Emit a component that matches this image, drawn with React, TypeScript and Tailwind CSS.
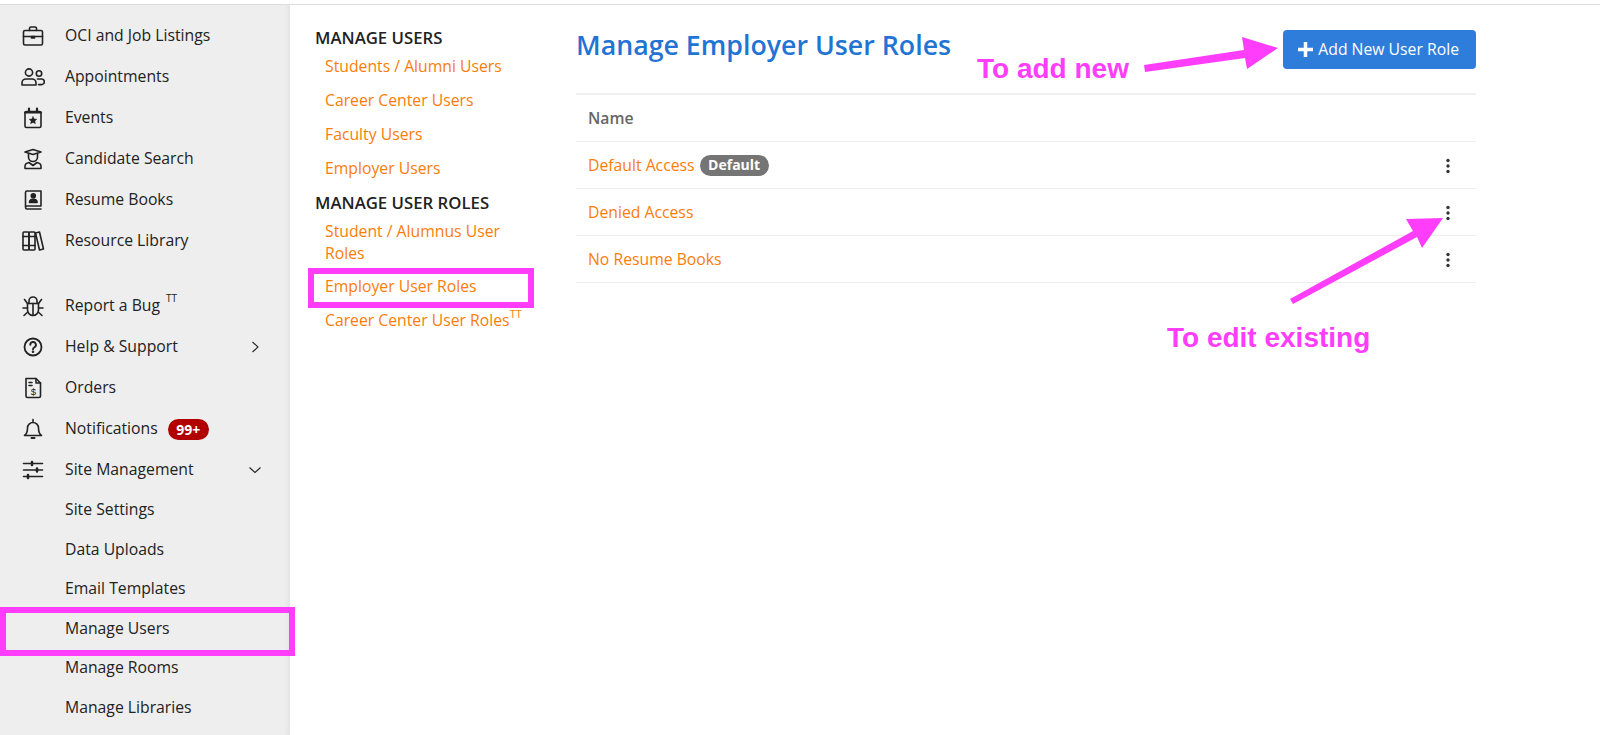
import { ReactNode } from "react";

const font = "font-['Open_Sans',sans-serif]";

const stroke = {
  fill: "none",
  stroke: "#222",
  strokeWidth: 1.6,
  strokeLinecap: "round" as const,
  strokeLinejoin: "round" as const,
};

function Icon({ children }: { children: ReactNode }) {
  return (
    <svg viewBox="0 0 24 24" className="w-6 h-6 shrink-0" {...stroke}>
      {children}
    </svg>
  );
}

const icons: Record<string, ReactNode> = {
  briefcase: (
    <>
      <rect x="2.500" y="6.500" width="19" height="14.500" rx="1.500" />
      <path d="M8.500 6.500V4.500A1.500 1.500 0 0 1 10 3h4a1.500 1.500 0 0 1 1.500 1.500v2" />
      <path d="M2.500 12.500h19" />
      <path d="M10.500 12.500h3v1.500h-3z" fill="#222" />
    </>
  ),
  people: (
    <>
      <circle cx="8" cy="7.500" r="3.600" />
      <circle cx="18" cy="8.500" r="2.700" />
      <path d="M1 20v-2a4 4 0 0 1 4-4h6a4 4 0 0 1 4 4v2z" />
      <path d="M16.500 14h4a2.800 2.800 0 0 1 2.800 2.800 2.800 2.800 0 0 1-2.800 2.800h-3" />
    </>
  ),
  calendar: (
    <>
      <rect x="4" y="5.500" width="16" height="16" rx="1.500" />
      <path d="M8 2.500v3M16 2.500v3M4 6.500h16" strokeWidth="2.200" />
      <path
        d="M12 10.500l1.200 2.400 2.700.3-2 1.800.5 2.700-2.400-1.300-2.400 1.300.5-2.700-2-1.800 2.700-.3z"
        fill="#222"
        strokeWidth="0.400"
      />
    </>
  ),
  graduate: (
    <>
      <path d="M4 5l8-2.500L20 5l-8 2.500z" />
      <path d="M7.500 6.500V10a4.500 4.500 0 0 0 9 0V6.500" />
      <path d="M8 15.500c-2.500.5-4 1.800-4 3.800v2.200h16v-2.200c0-2-1.500-3.300-4-3.800l-4 3z" />
    </>
  ),
  book: (
    <>
      <path d="M4.500 19V4.500A1.500 1.500 0 0 1 6 3h14v15H6a1.500 1.500 0 0 0 0 3h14" />
      <circle cx="12.300" cy="7.800" r="2" fill="#222" />
      <path d="M8.500 14.500c0-2.300 1.500-3.200 3.800-3.200s3.800.9 3.800 3.200z" fill="#222" />
    </>
  ),
  library: (
    <>
      <rect x="2" y="3" width="6" height="18" rx="1" />
      <rect x="8" y="3" width="6" height="18" rx="1" />
      <path d="M14.500 4l4-1 4 17-4 1zM2 7.500h12M2 16.500h12" />
    </>
  ),
  bug: (
    <>
      <path d="M6.500 9.500h11V16a5.500 5.500 0 0 1-11 0z" />
      <path d="M8 9.500V7a4 4 0 0 1 8 0v2.500M12 9.500v12" />
      <path d="M3.500 5.500l3 4M20.500 5.500l-3 4M2 14h4.500M22 14h-4.500M3 21.500l3.800-3.500M21 21.500L17.200 18" />
    </>
  ),
  help: (
    <>
      <circle cx="12" cy="12" r="8.500" strokeWidth="1.800" />
      <path d="M9.300 9.800a2.800 2.800 0 1 1 4.200 2.400c-1 .6-1.500 1.100-1.500 2" strokeWidth="1.900" />
      <circle cx="12" cy="16.700" r="0.500" fill="#222" />
    </>
  ),
  invoice: (
    <>
      <path d="M5 2.500h10l4.500 4.500v13A1.500 1.500 0 0 1 18 21.500H6.500A1.500 1.500 0 0 1 5 20z" />
      <path d="M15 2.500V7h4.500M8 6.500h3M8 9.500h3" />
      <text x="12.300" y="18.500" fontSize="9.500" textAnchor="middle" fill="#222" stroke="none" fontFamily="'Liberation Sans',sans-serif">$</text>
    </>
  ),
  bell: (
    <>
      <path d="M12 2.500v2M6.500 11a5.500 5.500 0 0 1 11 0c0 4 1 6 3 7.500h-17c2-1.500 3-3.500 3-7.500z" />
      <path d="M10.500 21h3" strokeWidth="2" />
    </>
  ),
  sliders: (
    <>
      <path d="M2.500 5.500h19M2.500 12h19M2.500 18.500h19" />
      <path d="M11 4v3M16 10.500v3M7 17v3" strokeWidth="2.500" />
    </>
  ),
};

function NavRow({
  icon,
  className = "",
  children,
}: {
  icon: string;
  className?: string;
  children: ReactNode;
}) {
  return (
    <div className={`flex items-center h-[41px] pl-[21px] text-[15.75px] text-[#222] ${className}`}>
      <Icon>{icons[icon]}</Icon>
      <div className="ml-[20px] flex items-center flex-1 pr-[29px] whitespace-nowrap">{children}</div>
    </div>
  );
}

function SubRow({ children }: { children: ReactNode }) {
  return <div className="h-[39.5px] pl-[65px] flex items-center">{children}</div>;
}

function Sidebar() {
  return (
    <aside className="relative w-[290px] shrink-0 bg-[#eeeeee] pt-[10px] shadow-[inset_-6px_0_6px_-5px_rgba(0,0,0,0.07)]">
      <NavRow icon="briefcase">OCI and Job Listings</NavRow>
      <NavRow icon="people">Appointments</NavRow>
      <NavRow icon="calendar">Events</NavRow>
      <NavRow icon="graduate">Candidate Search</NavRow>
      <NavRow icon="book">Resume Books</NavRow>
      <NavRow icon="library">Resource Library</NavRow>
      <NavRow icon="bug" className="mt-[24.500px]">
        Report a Bug <sup className="text-[10px] ml-[6px] -top-2">TT</sup>
      </NavRow>
      <NavRow icon="help">
        <span className="flex-1">Help &amp; Support</span>
        <svg viewBox="0 0 12 12" className="w-3 h-3" fill="none" stroke="#222" strokeWidth="1.100">
          <path d="M3.500 1l5.500 5-5.500 5" />
        </svg>
      </NavRow>
      <NavRow icon="invoice">Orders</NavRow>
      <NavRow icon="bell">
        Notifications
        <span className="ml-[10px] rounded-full bg-[#b00000] px-[8.500px] h-[21px] leading-[21px] text-[14px] font-bold text-white">
          99+
        </span>
      </NavRow>
      <NavRow icon="sliders">
        <span className="flex-1">Site Management</span>
        <svg viewBox="0 0 12 12" className="w-3 h-3" fill="none" stroke="#222" strokeWidth="1.100">
          <path d="M.5 3.500l5.500 5 5.500-5" />
        </svg>
      </NavRow>
      <div className="text-[15.75px] text-[#222]">
        <SubRow>Site Settings</SubRow>
        <SubRow>Data Uploads</SubRow>
        <SubRow>Email Templates</SubRow>
        <div className="relative">
          <SubRow>Manage Users</SubRow>
          <div className="absolute -top-[2.500px] left-0 h-[49px] w-[295px] border-[6px] border-[#ff3dfb]" />
        </div>
        <SubRow>Manage Rooms</SubRow>
        <SubRow>Manage Libraries</SubRow>
      </div>
    </aside>
  );
}

function SubLink({ className = "py-[6px]", children }: { className?: string; children: ReactNode }) {
  return <div className={`leading-[22px] pl-[10px] text-[15.75px] text-[#fa7d0a] ${className}`}>{children}</div>;
}

function SubHeading({ className = "", children }: { className?: string; children: ReactNode }) {
  return <h6 className={`text-[16.75px] leading-[22px] font-semibold text-[#222] ${className}`}>{children}</h6>;
}

function SubNav() {
  return (
    <nav className="w-[215px] ml-[25px] shrink-0 pt-[22px]">
      <SubHeading>MANAGE USERS</SubHeading>
      <SubLink>Students / Alumni Users</SubLink>
      <SubLink>Career Center Users</SubLink>
      <SubLink>Faculty Users</SubLink>
      <SubLink>Employer Users</SubLink>
      <SubHeading className="mt-[7px] whitespace-nowrap">MANAGE USER ROLES</SubHeading>
      <SubLink className="pt-[6px] pb-[5px]">Student / Alumnus User Roles</SubLink>
      <div className="relative">
        <SubLink>Employer User Roles</SubLink>
        <div className="absolute -top-[1px] -left-[7px] h-[40px] w-[226px] border-[6px] border-[#ff3dfb]" />
      </div>
      <SubLink className="py-[6px] whitespace-nowrap">
        Career Center User Roles
        <sup className="text-[11px] -top-2">TT</sup>
      </SubLink>
    </nav>
  );
}

function Kebab() {
  return (
    <svg viewBox="0 0 4 16" className="w-1 h-4 mr-[26px]" fill="#333">
      <circle cx="2" cy="2.500" r="1.700" />
      <circle cx="2" cy="8" r="1.700" />
      <circle cx="2" cy="13.500" r="1.700" />
    </svg>
  );
}

function RoleRow({ name, badge }: { name: string; badge?: string }) {
  return (
    <div className="flex items-center justify-between h-[47px] pt-[2px] pl-[12px] border-b border-[#eeeeee] text-[15.75px] text-[#fa7d0a]">
      <div className="flex items-center">
        {name}
        {badge && (
          <span className="ml-[5px] -mt-[2px] rounded-full bg-[#757575] px-[8.500px] h-[21px] leading-[20px] text-[14px] font-bold text-white">
            {badge}
          </span>
        )}
      </div>
      <Kebab />
    </div>
  );
}

function Main() {
  return (
    <main className="w-[900px] ml-[46px] shrink-0 pt-[25px]">
      <div className="flex justify-between items-start h-[63px]">
        <h1 className="text-[26.75px] leading-[30px] font-semibold text-[#1f74d4]">Manage Employer User Roles</h1>
        <button className="flex items-center h-[39px] pl-[15px] pr-[17px] rounded-[4px] bg-[#2f7ddb] text-[15.75px] text-white">
          <svg viewBox="0 0 15 15" className="w-[15px] h-[15px] mr-[5px]" fill="none" stroke="#fff" strokeWidth="3.500">
            <path d="M7.500 0v15M0 7.500h15" />
          </svg>
          Add New User Role
        </button>
      </div>
      <div className="border-t-2 border-[#f0f0f0] flex items-center h-[49px] pt-[1px] pl-[12px] text-[15.75px] font-semibold text-[#666] border-b border-b-[#eeeeee]">
        Name
      </div>
      <RoleRow name="Default Access" badge="Default" />
      <RoleRow name="Denied Access" />
      <RoleRow name="No Resume Books" />
    </main>
  );
}

function Annotations() {
  return (
    <>
      <div className="absolute left-[977px] top-[53px] text-[28px] leading-[32px] font-bold text-[#ff3dfb] font-['Liberation_Sans',sans-serif]">
        To add new
      </div>
      <div className="absolute left-[1167px] top-[322px] text-[28px] leading-[32px] font-bold text-[#ff3dfb] font-['Liberation_Sans',sans-serif]">
        To edit existing
      </div>
      <svg className="absolute left-0 top-0 w-[1600px] h-[735px] pointer-events-none" viewBox="0 0 1600 735" fill="#ff3dfb">
        <polygon points="1144,65 1244,50 1242,37 1278,48 1247,69 1245,58 1145,72" />
        <polygon points="1290,299 1413,231 1406,219 1443,218 1422,248 1417,237 1293,304" />
      </svg>
    </>
  );
}

export default function App() {
  return (
    <div className={`relative w-[1600px] h-[735px] overflow-hidden bg-white ${font}`}>
      <div className="h-[5px] border-b border-[#dddddd] bg-white" />
      <div className="flex h-[730px]">
        <Sidebar />
        <SubNav />
        <Main />
      </div>
      <Annotations />
    </div>
  );
}
